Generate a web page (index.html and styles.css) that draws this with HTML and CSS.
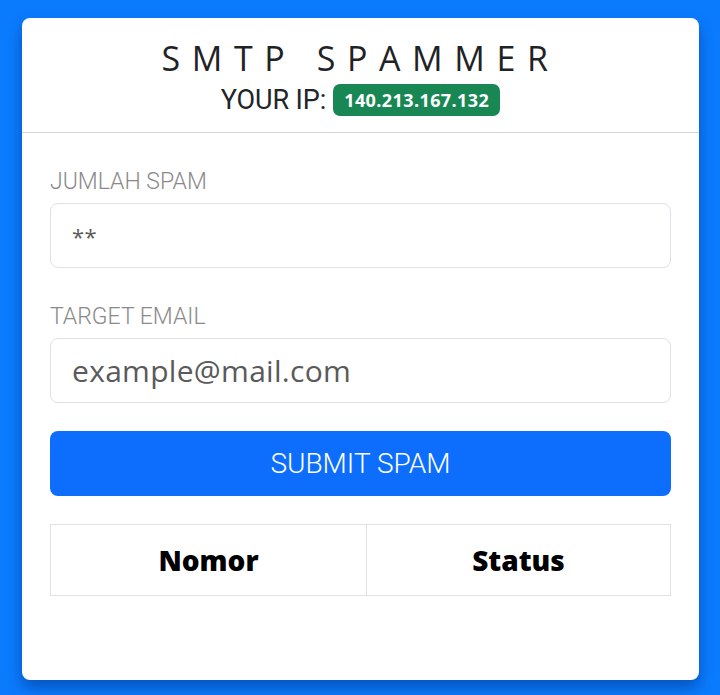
FILE: index.html
```html
<!DOCTYPE html>
<html lang="id">
<head>
<meta charset="utf-8">
<title>SMTP Spammer</title>
<link rel="stylesheet" href="styles.css">
</head>
<body>
<div class="page">
  <div class="card">
    <div class="card-header">
      <h1 class="title">SMTP SPAMMER</h1>
      <div class="ip-line"><span class="ip-label">YOUR IP:</span><span class="ip-badge">140.213.167.132</span></div>
    </div>
    <div class="card-body">
      <div class="field">
        <label class="label" for="jumlah">JUMLAH SPAM</label>
        <input class="input input-num" id="jumlah" type="text" placeholder="**">
      </div>
      <div class="field">
        <label class="label" for="email">TARGET EMAIL</label>
        <input class="input input-email" id="email" type="text" placeholder="example@mail.com">
      </div>
      <button class="submit" type="button">SUBMIT SPAM</button>
      <table class="result">
        <thead>
          <tr><th class="col-no">Nomor</th><th>Status</th></tr>
        </thead>
      </table>
    </div>
  </div>
</div>
</body>
</html>
```
FILE: styles.css
```css
* { box-sizing: border-box; }
html, body { margin: 0; padding: 0; }
body {
  background: #0a7bfd;
  font-family: "Open Sans", "Inter", sans-serif;
  width: 720px;
  height: 695px;
  overflow: hidden;
}
.page {
  padding: 18px 21px 0 22px;
}
.card {
  background: #fff;
  border-radius: 8px;
  height: 662px;
  box-shadow: 0 8px 14px rgba(0, 40, 120, 0.45);
  display: flex;
  flex-direction: column;
}
.card-header {
  border-bottom: 1px solid #d6d6d6;
  height: 115px;
  display: flex;
  flex-direction: column;
  align-items: center;
  padding-top: 20px;
}
.title {
  margin: 0;
  font-family: "Open Sans", sans-serif;
  font-weight: 500;
  font-size: 34px;
  line-height: 40px;
  letter-spacing: 11.6px;
  color: #1f2326;
}
.ip-line {
  display: flex;
  align-items: center;
  gap: 7px;
  margin-top: 6px;
}
.ip-label {
  font-family: "Roboto", sans-serif;
  font-size: 27px;
  letter-spacing: -0.1px;
  color: #212529;
}
.ip-badge {
  background: #198754;
  color: #fff;
  font-family: "Open Sans", sans-serif;
  font-weight: 700;
  font-size: 18px;
  letter-spacing: 0.4px;
  border-radius: 7px;
  padding: 4px 11px;
  line-height: 24px;
}
.card-body {
  padding: 35px 28px 0 28px;
  display: flex;
  flex-direction: column;
}
.field {
  display: flex;
  flex-direction: column;
  margin-bottom: 35px;
}
.field + .field { margin-bottom: 28px; }
.label {
  font-family: "Roboto", sans-serif;
  font-weight: 300;
  font-size: 23px;
  color: #8a8a8a;
  line-height: 28px;
  margin-bottom: 7px;
}
.input {
  height: 65px;
  border: 1px solid #dee2e6;
  border-radius: 8px;
  padding: 0 21px;
  font-family: "Open Sans", sans-serif;
  font-size: 30px;
  letter-spacing: 0.3px;
  color: #555;
  outline: none;
  background: #fff;
}
.input-num { font-size: 22px; }
.input::placeholder { color: #5a5a5a; }
.submit {
  height: 65px;
  border: none;
  border-radius: 8px;
  background: #0d6efd;
  color: #fff;
  font-family: "Roboto", sans-serif;
  font-size: 28px;
  font-weight: 300;
  cursor: pointer;
}
.result {
  margin-top: 28px;
  width: 100%;
  border-collapse: collapse;
}
.result th {
  border: 1px solid #dee2e6;
  height: 71px;
  font-family: "Open Sans", sans-serif;
  font-weight: 800;
  font-size: 28px;
  color: #000;
  text-align: center;
}
.result .col-no { width: 316px; }
```
